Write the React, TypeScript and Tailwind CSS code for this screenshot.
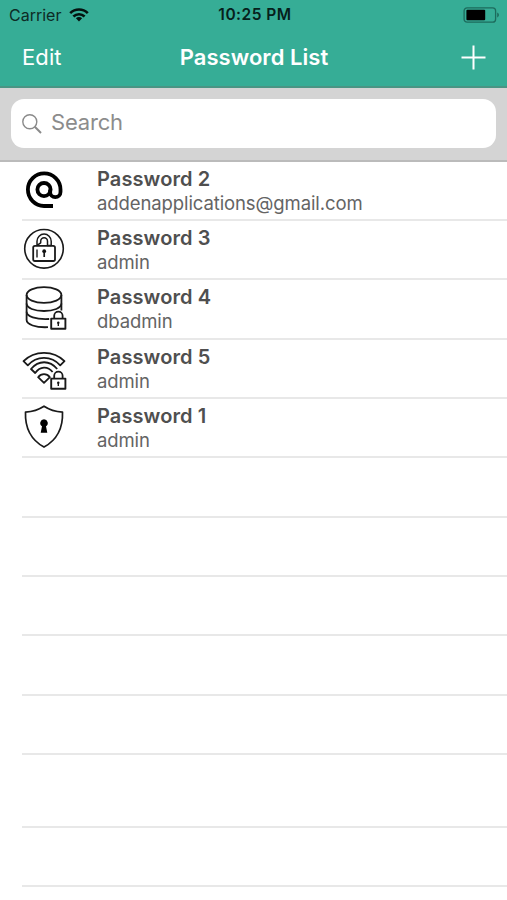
import type { ReactNode } from "react";

type Entry = {
  title: string;
  user: string;
  icon: ReactNode;
  height: string;
};

// Small padlock shared by the database and wifi icons
function MiniLock() {
  return (
    <g>
      <path d="M32.2 35.4v-2.6a4.2 4.2 0 0 1 8.4 0v2.6" strokeWidth="1.8" />
      <rect x="29.2" y="35.6" width="14.2" height="10.2" strokeWidth="1.9" />
      <circle cx="36.3" cy="39.8" r="1.2" fill="#111" stroke="none" />
      <path d="M36.3 40v3" strokeWidth="1.4" />
    </g>
  );
}

function IconBox({ children }: { children: ReactNode }) {
  return (
    <svg width="48" height="48" viewBox="0 0 48 48" fill="none" stroke="#1a1a1a" strokeWidth="1.8" strokeLinejoin="round">
      {children}
    </svg>
  );
}

function AtIcon() {
  return (
    <IconBox>
      <path
        d="M31 41h-9A16.3 16.3 0 1 1 38.5 24.6v2.4a5.2 5.2 0 0 1-10.4 0v-2.4"
        stroke="#000"
        strokeWidth="3.8"
      />
      <circle cx="22" cy="24.6" r="6.6" stroke="#000" strokeWidth="3.8" />
    </IconBox>
  );
}

function RoundLockIcon() {
  return (
    <IconBox>
      <circle cx="22" cy="24.8" r="19.3" strokeWidth="1.6" />
      <path d="M15 21.4v-4.2a7.1 7.1 0 0 1 14.2 0v4.2h-3.7v-4.2a3.4 3.4 0 0 0-6.8 0v1.6z" strokeWidth="1.5" />
      <rect x="11.2" y="21.8" width="21.8" height="15.2" rx="1.8" strokeWidth="1.8" />
      <path d="M15 25.4v8.2" strokeWidth="1.4" />
      <circle cx="22.2" cy="27.2" r="1.9" fill="#111" stroke="none" />
      <path d="M22.2 28v5" strokeWidth="1.7" />
    </IconBox>
  );
}

function DatabaseIcon() {
  return (
    <IconBox>
      <ellipse cx="22" cy="12" rx="17.4" ry="7.9" />
      <path d="M4.6 12v25c0 4.4 9 7.8 21.4 7.2M39.4 12v15.6" />
      <path d="M4.6 20.6c0 4.6 7.8 7.4 17.4 7.4s17.4-2.8 17.4-7.4M4.6 28.8c0 4.6 9 7.9 22.6 7.2" />
      <MiniLock />
    </IconBox>
  );
}

function WifiLockIcon() {
  return (
    <IconBox>
      <path d="M1.5 18.2C12.4 7 31.6 7 42.5 18.2l-4.3 4.2c-8.8-10-23.6-10-32.4 0z" />
      <path d="M35.2 26c-7.6-9-18.6-9-26.2 0l4.2 4c4.9-7 12.7-7 17.4-1" />
      <path d="M16.1 34.2c3.3-4 8.5-4 11.8 0L22 39.8z" />
      <MiniLock />
    </IconBox>
  );
}

function ShieldIcon() {
  return (
    <IconBox>
      <path
        d="M22 4.2c5.5 3.6 11.4 5.4 18.5 5.9.6 15.5-4.4 27.1-18.5 35C7.9 37.2 2.9 25.6 3.5 10.1 10.6 9.6 16.5 7.8 22 4.2z"
        strokeWidth="1.7"
      />
      <path d="M22 17.2a3.8 3.8 0 0 1 2 7l1.3 6.6h-6.6l1.3-6.6a3.8 3.8 0 0 1 2-7z" fill="#000" stroke="none" />
    </IconBox>
  );
}

const entries: Entry[] = [
  { title: "Password 2", user: "addenapplications@gmail.com", icon: <AtIcon />, height: "h-[59px]" },
  { title: "Password 3", user: "admin", icon: <RoundLockIcon />, height: "h-[59px]" },
  { title: "Password 4", user: "dbadmin", icon: <DatabaseIcon />, height: "h-[60px]" },
  { title: "Password 5", user: "admin", icon: <WifiLockIcon />, height: "h-[59px]" },
  { title: "Password 1", user: "admin", icon: <ShieldIcon />, height: "h-[59px]" },
];

const emptyRows = ["h-[60px]", "h-[59px]", "h-[59px]", "h-[60px]", "h-[59px]", "h-[73px]", "h-[59px]"];

function StatusBar() {
  return (
    <div className="grid h-[30px] grid-cols-3 items-center pr-[7px] pl-[9px] text-[#0d2b25]">
      <div className="flex items-center gap-2">
        <span className="text-[16px]">Carrier</span>
        <svg width="20" height="14" viewBox="0 0 20 14" fill="none" stroke="#04120f" strokeWidth="2.6">
          <path d="M1.2 5.2c4.9-4.9 12.7-4.9 17.6 0" />
          <path d="M4.4 8.5c3.1-3.1 8.1-3.1 11.2 0" />
          <path d="M10 13.4 6.9 10.3c1.7-1.6 4.5-1.6 6.2 0z" fill="#04120f" stroke="none" />
        </svg>
      </div>
      <span className="pl-px text-center text-[15.5px] font-semibold tracking-[0.5px] whitespace-nowrap text-[#06201b]">
        10:25 PM
      </span>
      <svg className="justify-self-end" width="37" height="16" viewBox="0 0 37 16" fill="none">
        <rect x="1.1" y="0.8" width="31.5" height="14.4" rx="3" stroke="#1d6b5c" strokeWidth="1.3" />
        <rect x="3.4" y="2.8" width="18.8" height="10.4" rx="1" fill="#000" />
        <path d="M34.2 5.6c2.3.8 2.3 4 0 4.8z" fill="#1d6b5c" />
      </svg>
    </div>
  );
}

export default function App() {
  return (
    <div className="h-[900px] w-[507px] overflow-hidden bg-white font-['Inter',sans-serif]">
      <header className="h-[88px] border-b-2 border-[#4a9584] bg-[#36ad96]">
        <StatusBar />
        <div className="grid h-[55px] grid-cols-[1fr_auto_1fr] items-center pr-[21px] pl-[22px] text-white">
          <span className="text-[22px] tracking-[0.1px]">Edit</span>
          <span className="text-[22px] font-semibold tracking-[0.05px]">Password List</span>
          <svg className="justify-self-end" width="25" height="25" viewBox="0 0 25 25" stroke="#fff" strokeWidth="2">
            <path d="M12.5 0.5v24M0.5 12.5h24" />
          </svg>
        </div>
      </header>

      <div className="h-[74px] border-b-2 border-[#bbbbbb] bg-[#d4d4d4] px-[11px] pt-[11px]">
        <div className="flex h-[49px] items-center gap-[9px] rounded-[13px] bg-white pl-[11px]">
          <svg width="20" height="20" viewBox="0 0 20 20" fill="none" stroke="#8a8a8a">
            <circle cx="7.8" cy="7.8" r="7" strokeWidth="1.4" />
            <path d="m12.8 12.8 6.2 6.2" strokeWidth="2" />
          </svg>
          <span className="pb-0.5 text-[22px] tracking-[-0.2px] text-[#8c8c8c]">Search</span>
        </div>
      </div>

      <ul>
        {entries.map((entry) => (
          <li key={entry.title} className={`${entry.height} ml-[22px] flex border-b-2 border-[#e8e8e8]`}>
            <div className="mt-[3px] w-[75px]">{entry.icon}</div>
            <div className="whitespace-nowrap">
              <div className="mt-[5px] h-[24px] text-[20px] leading-[24px] font-semibold tracking-[0.1px] text-[#4f4f4f]">
                {entry.title}
              </div>
              <div className="h-[25px] text-[18.5px] leading-[25px] tracking-[-0.1px] text-[#646464]">
                {entry.user}
              </div>
            </div>
          </li>
        ))}
        {emptyRows.map((height, i) => (
          <li key={i} className={`${height} ml-[22px] border-b-2 border-[#e8e8e8]`} />
        ))}
      </ul>
    </div>
  );
}
